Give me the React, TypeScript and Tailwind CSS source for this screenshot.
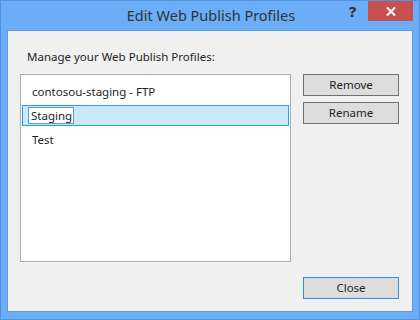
import React from "react";

export default function App() {
  const font = { fontFamily: '"Segoe UI", "Noto Sans", sans-serif' };
  return (
    <div
      className="w-[420px] h-[320px] bg-[#6badf6] border border-[#4f91dc] flex flex-col text-[#1e1e1e]"
      style={font}
    >
      {/* Title bar */}
      <div className="h-[29px] flex items-start relative">
        <div className="flex-1 h-[29px] flex items-center justify-center text-[14.5px] text-[#333333] pl-[2px]">
          Edit Web Publish Profiles
        </div>
        <div className="absolute left-[348px] top-[1px] h-[19px] flex items-center text-[15px] font-bold text-[#2b2b2b]">
          ?
        </div>
        <div className="absolute left-[367px] top-0 w-[45px] h-[20px] bg-[#c75050] flex items-center justify-center">
          <svg width="10" height="9" viewBox="0 0 10 9">
            <path d="M1 0.5 L9 8.5 M9 0.5 L1 8.5" stroke="#ffffff" strokeWidth="2" />
          </svg>
        </div>
      </div>

      {/* Client area */}
      <div className="mx-[6px] mb-[7px] flex-1 border border-[#5b9be3] bg-[#f0f0f0] flex flex-col pl-[12px] pr-[13px] pt-[18px] pb-[12px]">
        <div className="h-[16px] leading-[16px] text-[11.5px] pl-[7px]">
          Manage your Web Publish Profiles:
        </div>
        <div className="mt-[9px] flex gap-[12px]">
          <div className="w-[271px] h-[188px] bg-white border border-[#abadb3] flex flex-col pt-[6px] px-[1px] gap-[3px] text-[11.5px]">
            <div className="h-[21px] flex items-center pl-[10px]">contosou-staging - FTP</div>
            <div className="h-[21px] bg-[#cbe8f6] border border-[#26a0da] flex items-center pl-[5px]">
              <div className="w-[46px] h-[17px] bg-white border border-[#569de5] flex items-center pl-[2px] leading-none">
                Staging
                <span className="inline-block w-[1px] h-[13px] bg-black ml-[1px]" />
              </div>
            </div>
            <div className="h-[21px] flex items-center pl-[10px]">Test</div>
          </div>
          <div className="flex flex-col gap-[6px]">
            <button className="w-[96px] h-[22px] bg-[#dddddd] border border-[#707070] text-[11.5px] flex items-center justify-center">
              Remove
            </button>
            <button className="w-[96px] h-[22px] bg-[#dddddd] border border-[#707070] text-[11.5px] flex items-center justify-center">
              Rename
            </button>
          </div>
        </div>
        <div className="mt-[15px] flex justify-end">
          <button className="w-[96px] h-[22px] bg-[#dddddd] border border-[#3c8ce6] text-[11.5px] flex items-center justify-center">
            Close
          </button>
        </div>
      </div>
    </div>
  );
}
